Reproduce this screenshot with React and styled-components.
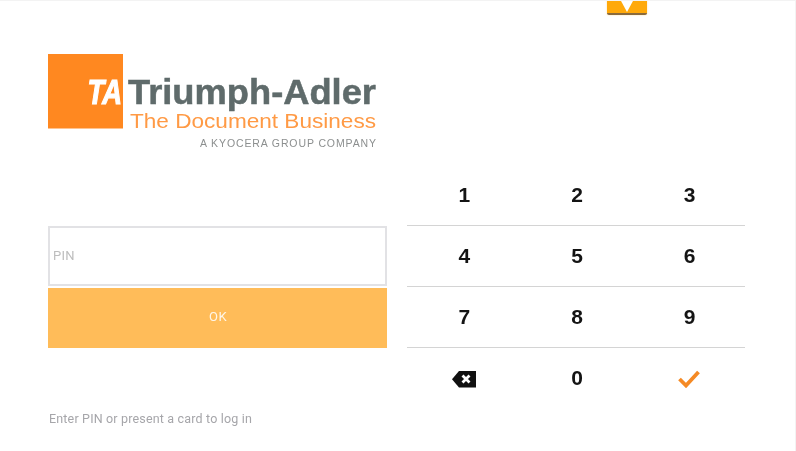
import React from "react";
import styled, { createGlobalStyle } from "styled-components";

const GlobalStyle = createGlobalStyle`
  html, body {
    margin: 0;
    padding: 0;
    background: #fff;
  }
  body {
    font-family: Roboto, "Liberation Sans", sans-serif;
  }
`;

const Screen = styled.div`
  position: relative;
  box-sizing: border-box;
  width: 796px;
  height: 451px;
  overflow: hidden;
  background: #fff;
  border-top: 1px solid #f3f3f3;
  border-right: 1px solid #f3f3f3;
  display: flex;
  padding: 0 0 0 48px;
  filter: blur(0.4px);
`;

const PullTab = styled.div`
  position: absolute;
  top: -1px;
  left: 607px;
  box-sizing: border-box;
  width: 40px;
  height: 15px;
  background: #ffa90a;
  border-bottom: 2px solid #8a6a3c;
  border-radius: 0 0 2px 2px;
  box-shadow: 0 0 2px rgba(255, 169, 10, 0.4);
  display: flex;
  justify-content: center;
`;

const LeftColumn = styled.div`
  width: 339px;
  display: flex;
  flex-direction: column;
`;

const Logo = styled.svg`
  display: block;
  margin-top: 53px;
  width: 330px;
  height: 97px;
`;

const PinField = styled.div`
  box-sizing: border-box;
  margin-top: 75px;
  height: 60px;
  border: 2px solid #e2e2e5;
  display: flex;
  align-items: center;
  padding: 0 0 2px 3px;
  font-size: 13px;
  letter-spacing: 0.3px;
  color: #bdbdbd;
`;

const OkButton = styled.div`
  box-sizing: border-box;
  margin-top: 2px;
  height: 60px;
  background: #ffbc59;
  color: #fff6e8;
  font-size: 13px;
  letter-spacing: 0.4px;
  padding: 0 0 3px 1px;
  display: flex;
  align-items: center;
  justify-content: center;
`;

const Hint = styled.div`
  margin-top: 63px;
  padding-left: 1px;
  font-size: 12.500px;
  line-height: 16px;
  letter-spacing: 0.17px;
  color: #a6a6aa;
`;

const Keypad = styled.div`
  margin: 164px 0 0 20px;
  width: 338px;
  align-self: flex-start;
`;

const KeyRow = styled.div`
  box-sizing: border-box;
  height: 61px;
  display: grid;
  grid-template-columns: repeat(3, 1fr);
  border-bottom: ${(p) => (p.$last ? "none" : "1px solid #d4d4d4")};
`;

const Key = styled.div`
  display: flex;
  align-items: center;
  justify-content: center;
  padding-left: ${(p) => (p.$icon ? "0" : "2px")};
  padding-bottom: ${(p) => (p.$bottom ? "2px" : "0")};
  font-family: "Liberation Sans", Arial, sans-serif;
  font-size: 21px;
  font-weight: 700;
  color: #141414;
`;

const rows = [
  ["1", "2", "3"],
  ["4", "5", "6"],
  ["7", "8", "9"],
];

const BackspaceIcon = () => (
  <svg width="26" height="18" viewBox="0 0 26 18">
    <path d="M8 1h17v16.500H8L1 9.200z" fill="#111" />
    <path d="M11.500 5.500l7 7M18.500 5.500l-7 7" stroke="#fff" strokeWidth="2.800" />
  </svg>
);

const CheckIcon = () => (
  <svg width="24" height="18" viewBox="0 0 24 18">
    <path d="M2.500 9l6.500 6.500L21.500 2" fill="none" stroke="#f58a25" strokeWidth="3.800" />
  </svg>
);

const App = () => {
  return (
    <>
      <GlobalStyle />
      <Screen>
        <PullTab>
          <svg width="14" height="12" viewBox="0 0 14 12">
            <path d="M0.500 0h13L7 12z" fill="#fff" />
          </svg>
        </PullTab>
        <LeftColumn>
          <Logo viewBox="0 0 330 97">
            <rect x="0" y="0" width="75" height="74.500" fill="#ff8820" />
            <text
              x="39.500"
              y="49.500"
              textLength="34.500"
              lengthAdjust="spacingAndGlyphs"
              fontFamily="'Liberation Sans', sans-serif"
              fontWeight="700"
              fontStyle="italic"
              fontSize="35"
              fill="#fff"
              stroke="#fff"
              strokeWidth="1.200"
            >
              TA
            </text>
            <text
              x="80"
              y="49.500"
              textLength="248"
              lengthAdjust="spacingAndGlyphs"
              fontFamily="'Liberation Sans', sans-serif"
              fontWeight="700"
              fontSize="35"
              fill="#5f6b6b"
              stroke="#5f6b6b"
              strokeWidth="0.500"
            >
              Triumph-Adler
            </text>
            <text
              x="82"
              y="74"
              textLength="246"
              lengthAdjust="spacingAndGlyphs"
              fontFamily="'Liberation Sans', sans-serif"
              fontSize="20.500"
              fill="#ff9a45"
            >
              The Document Business
            </text>
            <text
              x="152"
              y="93"
              textLength="176"
              lengthAdjust="spacing"
              fontFamily="'Liberation Sans', sans-serif"
              fontSize="10.500"
              fill="#8c8f8f"
            >
              A KYOCERA GROUP COMPANY
            </text>
          </Logo>
          <PinField>PIN</PinField>
          <OkButton>OK</OkButton>
          <Hint>Enter PIN or present a card to log in</Hint>
        </LeftColumn>
        <Keypad>
          {rows.map((row) => (
            <KeyRow key={row[0]}>
              {row.map((n) => (
                <Key key={n}>{n}</Key>
              ))}
            </KeyRow>
          ))}
          <KeyRow $last>
            <Key>
              <BackspaceIcon />
            </Key>
            <Key $bottom>0</Key>
            <Key $icon>
              <CheckIcon />
            </Key>
          </KeyRow>
        </Keypad>
      </Screen>
    </>
  );
};

export default App;
